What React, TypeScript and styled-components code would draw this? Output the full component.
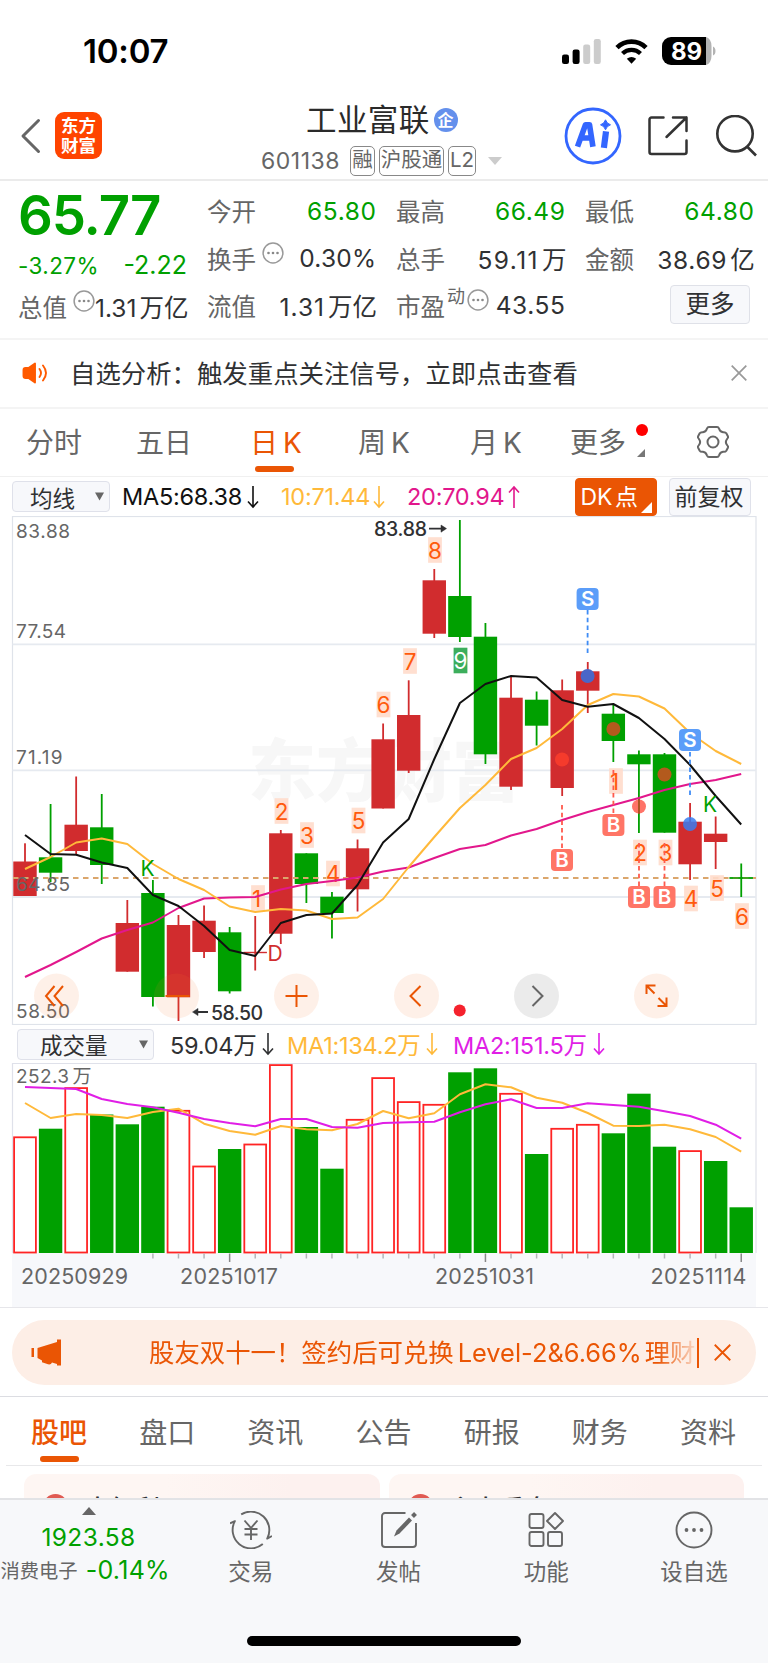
import React from "react";
import styled, { createGlobalStyle } from "styled-components";

const GREEN = "#00a000";
const RED = "#d12c2e";
const ORANGE = "#ea5504";
const GREY = "#666";
const INK = "#303133";
const FONT = `Inter, "Noto Sans CJK SC", sans-serif`;

const Global = createGlobalStyle`
  * { box-sizing: border-box; }
  body { margin: 0; background: #fff; font-family: ${FONT}; color: ${INK}; }
  svg { display: block; flex: none; }
  svg text { font-family: ${FONT}; }
`;

const Screen = styled.div`
  width: 768px;
  height: 1663px;
  overflow: hidden;
  display: flex;
  flex-direction: column;
  white-space: nowrap;
  > * { flex: none; }
`;

/* ---------- status bar ---------- */
const StatusBar = styled.div`
  height: 101px;
  display: flex;
  align-items: center;
  padding: 1px 52px 0 83px;
`;
const Clock = styled.div`
  flex: 1;
  font-size: 33px;
  font-weight: 600;
  letter-spacing: -0.2px;
  color: #000;
`;
const StatusIcons = styled.div`
  display: flex;
  align-items: center;
  gap: 14px;
`;

/* ---------- title bar ---------- */
const TitleBar = styled.div`
  height: 80px;
  display: flex;
  align-items: flex-start;
  border-bottom: 2px solid #ebebeb;
`;
const Back = styled.div`
  padding: 17px 0 0 20px;
`;
const Brand = styled.div`
  margin: 11px 0 0 14px;
  width: 47px;
  height: 47px;
  border-radius: 9px;
  background: #ff4400;
  color: #fff;
  font: 700 17.5px/20px "Noto Sans CJK SC", sans-serif;
  text-align: center;
  padding-top: 3px;
`;
const TitleBlock = styled.div`
  width: 244px;
  margin-left: 159px;
`;
const Name = styled.div`
  display: flex;
  align-items: center;
  height: 34px;
  padding-left: 45px;
  font-size: 30.5px;
  letter-spacing: 0.4px;
  color: #2a2a2a;
`;
const CorpBadge = styled.span`
  margin: 3px 0 0 4px;
  width: 24px;
  height: 24px;
  border-radius: 50%;
  background: #6490ec;
  color: #fff;
  font: 700 16px/23px "Noto Sans CJK SC", sans-serif;
  text-align: center;
  letter-spacing: 0;
`;
const Sub = styled.div`
  display: flex;
  align-items: center;
  height: 31px;
  margin-top: 10px;
  font-size: 23px;
  color: ${GREY};
`;
const Code = styled.span`
  width: 89px;
  letter-spacing: 0.5px;
`;
const Tag = styled.span<{ $w: number }>`
  width: ${(p) => p.$w}px;
  height: 30px;
  margin-right: 4px;
  border: 1.5px solid #888;
  border-radius: 5px;
  text-align: center;
  font-size: 20.5px;
  line-height: 26px;
`;
const Actions = styled.div`
  display: flex;
  align-items: center;
  height: 70px;
  margin-left: 59px;
`;

/* ---------- quote ---------- */
const Quote = styled.div`
  height: 159px;
  display: grid;
  grid-template-columns: 169px 169px 169px 169px;
  column-gap: 20px;
  padding: 0 14px 0 18px;
  border-bottom: 2px solid #f4f4f4;
`;
const QuoteCol = styled.div`
  display: flex;
  flex-direction: column;
  padding-top: 6px;
`;
const Cell = styled.div`
  position: relative;
  height: 47.4px;
  display: flex;
  justify-content: space-between;
  align-items: center;
  font-size: 24.5px;
`;
const Label = styled.span`
  display: flex;
  align-items: center;
  color: ${GREY};
  font-size: 24.5px;
`;
const Value = styled.span<{ $c?: string; $ls?: number }>`
  color: ${(p) => p.$c || INK};
  letter-spacing: ${(p) => p.$ls ?? 0.6}px;
  margin-right: ${(p) => -(p.$ls ?? 0.6)}px;
`;
const Unit = styled.span`
  margin-left: 3px;
  letter-spacing: 0;
`;
const Sup = styled.span`
  font-size: 18px;
  margin: -20px 2px 0 2px;
`;
const Dots = styled.span`
  display: flex;
  margin: -11px 0 0 6px;
`;
const Price = styled.div`
  height: 60px;
  line-height: 57px;
  font-size: 54.5px;
  font-weight: 600;
  letter-spacing: -1.1px;
  color: ${GREEN};
`;
const Change = styled.div`
  height: 36px;
  display: flex;
  justify-content: space-between;
  align-items: center;
  color: ${GREEN};
  font-size: 22.5px;
  letter-spacing: 0.4px;
  span + span { font-size: 25px; letter-spacing: 0; }
`;
const MoreButton = styled.div`
  margin: -2px 4px 0 auto;
  width: 80px;
  height: 39px;
  border: 1.5px solid #dfe1e8;
  border-radius: 4px;
  background: #f7f8fb;
  text-align: center;
  font-size: 24.5px;
  line-height: 36px;
`;

/* ---------- notice ---------- */
const Notice = styled.div`
  height: 69px;
  display: flex;
  align-items: center;
  padding: 0 21px 1px 22px;
  border-bottom: 2px solid #f4f4f4;
  font-size: 25.4px;
`;
const NoticeText = styled.div`
  flex: 1;
  margin: -2px 0 0 22px;
`;

/* ---------- period tabs ---------- */
const Periods = styled.div`
  height: 68px;
  display: flex;
  border-bottom: 1px solid #f0f0f0;
  position: relative;
`;
const Period = styled.div<{ $on?: boolean; $w: number; $ml?: number }>`
  position: relative;
  width: ${(p) => p.$w}px;
  margin-left: ${(p) => p.$ml || 0}px;
  padding-top: 14px;
  font-size: 28px;
  line-height: 40px;
  color: ${(p) => (p.$on ? ORANGE : GREY)};
  word-spacing: -3px;
`;
const Underline = styled.i<{ $x: number; $y: number }>`
  position: absolute;
  left: ${(p) => p.$x}px;
  top: ${(p) => p.$y}px;
  width: 39px;
  height: 6px;
  border-radius: 3px;
  background: ${ORANGE};
`;
const NewDot = styled.i`
  position: absolute;
  left: 66px;
  top: 15px;
  width: 12px;
  height: 12px;
  border-radius: 50%;
  background: #ff0000;
`;
const Corner = styled.i<{ $c: string; $s: number; $r: number; $b: number }>`
  position: absolute;
  right: ${(p) => p.$r}px;
  bottom: ${(p) => p.$b}px;
  border-style: solid;
  border-width: 0 0 ${(p) => p.$s}px ${(p) => p.$s}px;
  border-color: transparent transparent ${(p) => p.$c} transparent;
`;

/* ---------- indicator bars ---------- */
const Indicators = styled.div<{ $h: number; $pl: number }>`
  height: ${(p) => p.$h}px;
  display: flex;
  align-items: center;
  padding: 0 16px 0 ${(p) => p.$pl}px;
`;
const Select = styled.div<{ $w: number; $pl: number }>`
  width: ${(p) => p.$w}px;
  height: 31px;
  padding: 0 5px 0 ${(p) => p.$pl}px;
  border: 1.5px solid #dfe1ea;
  border-radius: 4px;
  background: #f7f8fb;
  display: flex;
  align-items: center;
  justify-content: space-between;
  font-size: 22.5px;
`;
const Metric = styled.div<{ $c: string; $ml: number; $w: number }>`
  display: flex;
  align-items: center;
  justify-content: space-between;
  width: ${(p) => p.$w}px;
  margin-left: ${(p) => p.$ml}px;
  color: ${(p) => p.$c};
  font-size: 23.5px;
  letter-spacing: -0.25px;
`;
const Toggle = styled.div<{ $on?: boolean; $w: number; $ml: number }>`
  position: relative;
  width: ${(p) => p.$w}px;
  height: 38px;
  margin-left: ${(p) => p.$ml}px;
  border-radius: 4px;
  border: 1.5px solid ${(p) => (p.$on ? ORANGE : "#dfe1ea")};
  background: ${(p) => (p.$on ? ORANGE : "#f7f8fb")};
  color: ${(p) => (p.$on ? "#fff" : INK)};
  font-size: 23px;
  line-height: 37px;
  padding-left: 4.5px;
  word-spacing: -4px;
`;

/* ---------- charts ---------- */
const Chart = styled.div`
  height: 509px;
`;
const VolumeChart = styled.div`
  height: 244px;
`;

/* ---------- promo ---------- */
const PromoWrap = styled.div`
  height: 90px;
  padding: 12px;
  border-top: 1px solid #e6e6ea;
  border-bottom: 1px solid #dcdde2;
`;
const Promo = styled.div`
  height: 65px;
  border-radius: 33px;
  background: #fdeee6;
  color: ${ORANGE};
  display: flex;
  align-items: center;
  padding: 0 23px 0 19px;
  font-size: 25.4px;
`;
const PromoText = styled.div`
  margin: -3px 0 0 86px;
  width: 547px;
  overflow: hidden;
  -webkit-mask-image: linear-gradient(90deg, #000 93%, transparent 101%);
  mask-image: linear-gradient(90deg, #000 93%, transparent 101%);
`;
const Latin = styled.span`
  margin: 0 3px 0 4px;
`;
const PromoRule = styled.i`
  width: 1.5px;
  height: 30px;
  margin: 0 15px 0 1px;
  background: ${ORANGE};
`;

/* ---------- content tabs ---------- */
const Tabs = styled.div`
  position: relative;
  height: 69px;
  margin: 0 6px;
  padding: 0 26px 0 25px;
  display: flex;
  justify-content: space-between;
  border-bottom: 1.5px solid #e8e8ea;
`;
const Tab = styled.div<{ $on?: boolean }>`
  font-size: 28px;
  line-height: 40px;
  padding-top: 16px;
  color: ${(p) => (p.$on ? ORANGE : GREY)};
  font-weight: ${(p) => (p.$on ? 500 : 400)};
`;
const Cards = styled.div`
  height: 33px;
  padding: 8px 24px 0;
  display: grid;
  grid-template-columns: 1fr 1fr;
  gap: 9px;
  overflow: hidden;
`;
const Card = styled.div`
  height: 80px;
  padding: 16px 19px 0;
  border-radius: 12px;
  background: linear-gradient(90deg, #fef6f3 40%, #fdf1ef 75%);
  display: flex;
  align-items: flex-start;
  gap: 17px;
  font-size: 25px;
  line-height: 38px;
  font-weight: 500;
`;
const CardDot = styled.i`
  width: 25px;
  height: 25px;
  margin-top: 4px;
  border-radius: 50%;
  background: #e05a52;
`;

/* ---------- bottom bar ---------- */
const BottomBar = styled.div`
  position: relative;
  height: 165px;
  margin-top: -1px;
  background: #f7f8fa;
  border-top: 2px solid #e2e3e6;
  display: flex;
`;
const IndexBox = styled.div`
  width: 177px;
  display: flex;
  flex-direction: column;
  align-items: center;
  padding-top: 7px;
  color: ${GREEN};
`;
const IndexValue = styled.div`
  height: 36px;
  line-height: 38px;
  font-size: 24.5px;
  letter-spacing: 0.4px;
  margin-top: 3px;
`;
const IndexRow = styled.div`
  display: flex;
  align-items: center;
  gap: 8px;
  width: 176px;
  font-size: 25px;
  letter-spacing: 0.3px;
  height: 32px;
  span:first-child { font-size: 19.3px; letter-spacing: 0; color: ${GREY}; }
`;
const Action = styled.div`
  width: 147.7px;
  display: flex;
  flex-direction: column;
  align-items: center;
  padding-top: 11px;
  color: ${GREY};
  font-size: 22.5px;
  span { line-height: 32px; margin-top: 7px; }
`;
const HomeIndicator = styled.i`
  position: absolute;
  left: 247px;
  bottom: 17px;
  width: 274px;
  height: 10px;
  border-radius: 5px;
  background: #000;
`;

/* ---------- data ---------- */
// [up?, high, low, body top, body bottom]
type Candle = [number, number, number, number, number];
const candles: Candle[] = [
  [1, 843.3, 896, 861.5, 896], [0, 804, 882, 857.3, 872.7], [1, 776.5, 854, 824.7, 851],
  [0, 794, 884, 827.3, 865], [1, 900, 971.7, 923, 971.7], [0, 880, 1006.5, 893, 997],
  [1, 915, 1021, 925, 997.3], [1, 905.5, 958, 920.7, 952], [0, 927, 993.5, 932.3, 991.3],
  [1, 916, 970.5, 951.8, 953.2], [1, 830, 944, 833.3, 933.7], [0, 853.3, 903, 853.3, 884],
  [0, 892, 938.5, 896.7, 913], [1, 839.5, 911.5, 848.3, 889.3], [1, 723.5, 808.5, 739.3, 808.5],
  [1, 680.3, 773, 715, 770.7], [1, 569, 638, 580.3, 633.7], [0, 520, 642, 596, 637],
  [0, 623, 764, 636.7, 754.3], [1, 676.5, 790, 697.7, 786.7], [0, 691.5, 745.5, 699.7, 725.7],
  [1, 679.5, 796, 690.3, 788], [1, 662, 713, 671.3, 690.7], [0, 704.5, 762, 713.7, 741],
  [0, 750.5, 833, 754.3, 764.3], [0, 753, 832.7, 754.3, 832.7], [1, 803, 880, 821.7, 864.3],
  [1, 816.5, 869, 833.7, 842], [0, 863.5, 897, 877.3, 878.7],
];
const ma5 = [835, 854, 854.7, 862.5, 868, 895, 906, 926, 950, 956, 923, 915, 913.5, 885, 842.5, 819, 759, 703, 684, 676, 677.5, 700, 706.7, 704, 718, 739, 765, 796, 824.5];
const ma10 = [869, 857, 842.5, 838.5, 844, 864, 879, 890, 906.5, 912, 909, 910.5, 919, 917.5, 899, 867, 837, 808, 785, 759, 748, 729, 705, 694, 696.5, 708.5, 733, 751, 764];
const ma20 = [977, 965, 952, 938.5, 930, 922.5, 908, 898.5, 897.5, 897, 889.5, 884, 881, 877.5, 871.5, 867.5, 858, 849, 845, 835.5, 829, 820, 812, 805, 798, 790, 784, 780, 774];
// [up?, bar top]
const volumes: [number, number][] = [
  [1, 1136.5], [0, 1128.7], [1, 1087.3], [0, 1114.5], [0, 1124.3], [0, 1106.7], [1, 1110], [1, 1165.7],
  [0, 1149], [1, 1143.7], [1, 1064.3], [0, 1127], [0, 1168.7], [1, 1119], [1, 1077.3], [1, 1101.3],
  [1, 1104], [0, 1072.3], [0, 1068.3], [1, 1093], [0, 1154], [1, 1128], [1, 1124], [0, 1133.3],
  [0, 1093.7], [0, 1146.7], [1, 1150.3], [0, 1161], [0, 1207.3],
];
const vma1 = [234, 279, 267, 270, 279, 261, 251, 296, 318, 329, 303, 313, 316, 297, 258, 280, 265, 208, 178, 187, 218, 233, 264, 302, 303, 299, 313, 336, 380].map((v) => 1025 + v / 3);
const vma2 = [186, 189, 192, 222, 237, 247, 263, 282, 294, 304, 282, 282, 306, 308, 294, 292, 290, 262, 238, 223, 249, 249, 235, 240, 245, 259, 273, 299, 341].map((v) => 1025 + v / 3);

const cx = (i: number) => 25 + 25.58 * i;
const pts = (a: number[]) => a.map((y, i) => `${cx(i).toFixed(1)},${y.toFixed(1)}`).join(" ");

// [text, centre x, centre y, filled?]
const counts: [string, number, number, number?][] = [
  ["8", 435, 550], ["7", 410, 661], ["9", 460.5, 660.5, 1], ["6", 383.5, 704.5], ["1", 616, 781],
  ["2", 281.5, 811], ["3", 307, 835], ["4", 333, 873.5], ["5", 358.5, 820.5], ["1", 258, 898],
  ["2", 640, 852.5], ["3", 665.5, 852.5], ["4", 691, 898.5], ["5", 717, 888], ["6", 742, 916],
];

const RoundKey = ({ x, grey, children }: { x: number; grey?: boolean; children?: React.ReactNode }) => (
  <g transform={`translate(${x} 996)`} fill="none" stroke={grey ? "#666" : ORANGE} strokeWidth="2">
    <circle r="22.5" fill={grey ? "#888" : "#f5732d"} fillOpacity={grey ? 0.17 : 0.11} stroke="none" />
    {children}
  </g>
);

const Signal = ({ x, y, kind }: { x: number; y: number; kind: "S" | "B" }) => (
  <g>
    <rect x={x - 11} y={y - 11} width="22" height="22" rx="4" fill={kind === "S" ? "#5b9df9" : "#ff7566"} />
    <text x={x} y={y + 7.3} fontSize="20.5" fontWeight="600" fill="#fff" textAnchor="middle">{kind}</text>
  </g>
);

const PriceChart = () => (
  <svg width="768" height="509" viewBox="0 516 768 509">
    <text x="248" y="796" fontSize="68" fontWeight="900" fill="#f7f7f7" textLength="272">东方财富</text>
    <g stroke="#dfe3ea" fill="none">
      <rect x="12.5" y="516.5" width="743.5" height="508" strokeWidth="1.2" />
      <path d="M12.5 644.4H756M12.5 770.3H756M12.5 897H756" strokeWidth="1.8" stroke="#e6eaf0" />
    </g>
    {candles.map(([up, h, l, t, b], i) => (
      <g key={i} fill={up ? RED : GREEN}>
        <rect x={cx(i) - 0.9} y={h} width="1.8" height={l - h} />
        <rect x={cx(i) - 11.7} y={t} width="23.4" height={b - t} />
      </g>
    ))}
    <path d="M13 878H756" stroke="#dba66c" strokeWidth="2" strokeDasharray="5.5 4.5" />
    <path d={`M${cx(28) - 11.7} 878h23.4`} stroke={GREEN} strokeWidth="1.4" />
    <g fontSize="19" fill={GREY}>
      <text x="16" y="538" textLength="54">83.88</text>
      <text x="16" y="637.5" textLength="50">77.54</text>
      <text x="16" y="764" textLength="46.5">71.19</text>
      <text x="16" y="891" textLength="54">64.85</text>
      <text x="16" y="1017.5" textLength="54">58.50</text>
    </g>
    {counts.map(([t, x, y, f], i) => (
      <g key={i}>
        <rect x={x - 6.9} y={y - 12.8} width="13.8" height="25.6" fill={f ? "#3cae5c" : "#ffdccb"} fillOpacity={f ? 1 : 0.9} />
        <text x={t === "1" ? x - 1.5 : x} y={y + 8.6} fontSize="22.5" fill={f ? "#fff" : "#ff5a0c"} textAnchor="middle">{t}</text>
      </g>
    ))}
    <g fill="none" strokeWidth="2" strokeLinejoin="round">
      <polyline points={pts(ma20)} stroke="#e2178c" />
      <polyline points={pts(ma10)} stroke="#ffb93a" />
      <polyline points={pts(ma5)} stroke="#111" />
    </g>
    <g fill="none" strokeWidth="1.8" strokeDasharray="4.5 3.2">
      <path d="M587.6 610V655M690 752V797" stroke="#3f8cf5" />
      <path d="M562 805V850M613.4 770V815M639 843V887M664.5 843V887" stroke="#ff5a4d" />
    </g>
    <g>
      <circle cx="587.6" cy="676" r="7" fill="#4a66c8" />
      <circle cx="690" cy="824" r="7" fill="#3a7cf0" fillOpacity="0.85" />
      <circle cx="562" cy="759.5" r="7" fill="#f53b2c" />
      <circle cx="613.4" cy="729" r="7" fill="#b35a1d" />
      <circle cx="664.5" cy="774.5" r="7" fill="#b35a1d" />
      <circle cx="639" cy="806.5" r="7" fill="#ff5a4d" fillOpacity="0.85" />
      <path d="M639 799v15" stroke="#a0521d" strokeWidth="1.6" />
    </g>
    <Signal x={587.6} y={599} kind="S" />
    <Signal x={690} y={740} kind="S" />
    <Signal x={562} y={860} kind="B" />
    <Signal x={613.4} y={825} kind="B" />
    <Signal x={639} y={897} kind="B" />
    <Signal x={664.5} y={897} kind="B" />
    <g fontSize="21" fill={GREEN}>
      <text x="140.5" y="875.5">K</text>
      <text x="703" y="811.5">K</text>
      <text x="267.5" y="961" fill={RED}>D</text>
    </g>
    <g fontSize="19.5" fontWeight="550" fill={INK}>
      <text x="374" y="536" textLength="53">83.88</text>
      <text x="211" y="1020" textLength="52">58.50</text>
    </g>
    <g stroke={INK} strokeWidth="1.8" fill={INK}>
      <path d="M429 528.6h16M208 1012h-14" />
      <path d="M441 525l5.5 3.6-5.5 3.6zM198 1008.4l-5.5 3.6 5.5 3.6z" strokeWidth="0.5" />
    </g>
    <RoundKey x={56.5}><path d="M-2-10l-8.500 10 8.500 10M6.500-10l-8.500 10 8.500 10" /></RoundKey>
    <RoundKey x={176.5}><path d="M-11 0h24" /></RoundKey>
    <RoundKey x={296.5}><path d="M-11 0h22M0-11v22" /></RoundKey>
    <RoundKey x={416.5}><path d="M4-10l-10 10 10 10" /></RoundKey>
    <RoundKey x={536.5} grey><path d="M-4-10l10 10-10 10" /></RoundKey>
    <RoundKey x={656.5}><path d="M-10-2v-8.500h9M-10-10.500l8 8M10 1.500v8.500h-9M10 10l-8-8" /></RoundKey>
    <circle cx="459.7" cy="1010.5" r="6" fill="#f5222d" />
  </svg>
);

const VolumePlot = () => (
  <svg width="768" height="244" viewBox="0 1063 768 244">
    <rect x="12" y="1253" width="744" height="55" fill="#f7f8fb" />
    <path d="M12.5 1253V1063.5H756V1253" fill="none" stroke="#dfe1ea" strokeWidth="1.2" />
    {volumes.map(([up, t], i) =>
      up ? (
        <rect key={i} x={cx(i) - 10.9} y={t + 0.8} width="21.8" height={1251.700 - t} fill="#fff" stroke="#ff2424" strokeWidth="1.8" />
      ) : (
        <rect key={i} x={cx(i) - 11.7} y={t} width="23.4" height={1253 - t} fill={GREEN} />
      )
    )}
    <g fontSize="19" fill={GREY}>
      <text x="16" y="1083" textLength="53">252.3</text>
      <text x="72.5" y="1083">万</text>
    </g>
    <g fill="none" strokeWidth="2" strokeLinejoin="round">
      <polyline points={pts(vma1)} stroke="#ffb93a" />
      <polyline points={pts(vma2)} stroke="#e01ee6" />
    </g>
    {volumes.map((_, i) =>
      i < 5 ? null : (
        <path key={i} d={`M${cx(i)} 1253.5v${i % 10 === 8 ? 8.5 : 5}`} stroke={i % 10 === 8 ? "#888" : "#b4b4b8"} strokeWidth="1.5" />
      )
    )}
    <g fontSize="21.5" fill={GREY}>
      <text x="21" y="1283.5" textLength="107">20250929</text>
      <text x="180" y="1283.5" textLength="98">20251017</text>
      <text x="435" y="1283.5" textLength="99">20251031</text>
      <text x="650.5" y="1283.5" textLength="96">20251114</text>
    </g>
  </svg>
);

const Arrow = ({ up }: { up?: boolean }) => (
  <svg width="12" height="24" viewBox="0 0 12 24" fill="none" stroke="currentColor" strokeWidth="1.6">
    <path d={up ? "M6 23V2M1 7.500L6 2l5 5.500" : "M6 1v21M1 16.500L6 22l5-5.500"} />
  </svg>
);
const Caret = () => (
  <svg width="9" height="9" viewBox="0 0 9 9"><path d="M0 0.500h9L4.500 8.500z" fill="#666" /></svg>
);
const DotsIcon = () => (
  <svg width="22" height="22" viewBox="0 0 22 22">
    <circle cx="11" cy="11" r="9.9" fill="none" stroke="#999" strokeWidth="1.5" />
    <g fill="#888"><circle cx="6.500" cy="11" r="1.3" /><circle cx="11" cy="11" r="1.3" /><circle cx="15.500" cy="11" r="1.3" /></g>
  </svg>
);
const Cross = ({ s, c }: { s: number; c: string }) => (
  <svg width={s} height={s} viewBox="0 0 16 16"><path d="M0.700 0.700l14.600 14.600M15.300 0.700L0.700 15.300" stroke={c} strokeWidth="1.7" /></svg>
);

export default function App() {
  return (
    <Screen>
      <Global />
      <StatusBar>
        <Clock>10:07</Clock>
        <StatusIcons>
          <svg width="39" height="25" viewBox="0 0 39 25">
            <rect x="0" y="15.5" width="7" height="9.5" rx="2.2" />
            <rect x="10.6" y="10.5" width="7" height="14.5" rx="2.2" />
            <rect x="21.2" y="5.5" width="7" height="19.5" rx="2.2" fill="#ccc" />
            <rect x="31.8" y="0" width="7" height="25" rx="2.2" fill="#ccc" />
          </svg>
          <svg width="33" height="25" viewBox="0 0 33 25">
            <path d="M2 8.600a20.500 20.500 0 0 1 29 0" fill="none" stroke="#000" strokeWidth="4.6" />
            <path d="M7.500 14.600a12.800 12.800 0 0 1 18 0" fill="none" stroke="#000" strokeWidth="4.2" />
            <path d="M11.800 19.800a7.500 7.500 0 0 1 9.400 0L16.500 24.700z" />
          </svg>
          <svg width="54" height="28" viewBox="0 0 54 28">
            <path d="M9 0H44v28H9a9 9 0 0 1-9-9V9a9 9 0 0 1 9-9z" />
            <path d="M44 0a6.500 9 0 0 1 5.500 9v10a6.500 9 0 0 1-5.500 9z" fill="#b3b3b3" />
            <path d="M51 9.500q2.500 1 2.500 4.500t-2.500 4.500z" fill="#b3b3b3" />
            <text x="24.5" y="22.5" fontSize="24" fontWeight="650" fill="#fff" textAnchor="middle">89</text>
          </svg>
        </StatusIcons>
      </StatusBar>

      <TitleBar>
        <Back>
          <svg width="21" height="36" viewBox="0 0 21 36"><path d="M18.500 2.500L3 18l15.500 15.500" fill="none" stroke="#666" strokeWidth="3" strokeLinecap="round" strokeLinejoin="round" /></svg>
        </Back>
        <Brand>东方<br />财富</Brand>
        <TitleBlock>
          <Name>工业富联<CorpBadge>企</CorpBadge></Name>
          <Sub>
            <Code>601138</Code>
            <Tag $w={25}>融</Tag>
            <Tag $w={65}>沪股通</Tag>
            <Tag $w={28}>L2</Tag>
            <svg width="14" height="8" viewBox="0 0 14 8" style={{ marginLeft: 8 }}><path d="M0 0h14L7 8z" fill="#ccc" /></svg>
          </Sub>
        </TitleBlock>
        <Actions>
          <svg width="58" height="58" viewBox="0 0 58 58">
            <circle cx="29" cy="29" r="27" fill="#fff" stroke="#3366ff" strokeWidth="2.8" />
            <path d="M14.500 37L21.500 17.800h4L28.500 37M19 31h8" fill="none" stroke="#3366ff" strokeWidth="5.6" strokeLinejoin="round" strokeLinecap="square" />
            <path d="M41.600 27.500l-1.300 10.300" stroke="#3366ff" strokeWidth="6.200" strokeLinecap="square" />
            <path d="M41.500 12.800q1.200 3.800 5 5-3.800 1.200-5 5-1.200-3.800-5-5 3.800-1.200 5-5z" fill="#3366ff" stroke="#3366ff" />
          </svg>
          <svg width="42" height="42" viewBox="0 0 42 42" style={{ marginLeft: 25 }} fill="none" stroke="#333" strokeWidth="2.5" strokeLinejoin="round" strokeLinecap="round">
            <path d="M16.500 2.500H4.500a2 2 0 0 0-2 2V37a2 2 0 0 0 2 2h33a2 2 0 0 0 2-2V25.500M26 2.500h13.500V16M39.500 2.500L19.500 22" />
          </svg>
          <svg width="42" height="42" viewBox="0 0 42 42" style={{ marginLeft: 26 }} fill="none" stroke="#333" strokeWidth="2.6">
            <circle cx="20" cy="18.700" r="17.7" /><path d="M32 31.500L41 40.500" />
          </svg>
        </Actions>
      </TitleBar>

      <Quote>
        <QuoteCol>
          <Price>65.77</Price>
          <Change><span>-3.27%</span><span>-2.22</span></Change>
          <Cell><Label>总值<Dots><DotsIcon /></Dots></Label><Value $ls={0}>1.31<Unit>万亿</Unit></Value></Cell>
        </QuoteCol>
        <QuoteCol>
          <Cell><Label>今开</Label><Value $c={GREEN}>65.80</Value></Cell>
          <Cell><Label>换手<Dots><DotsIcon /></Dots></Label><Value $ls={0.2}>0.30%</Value></Cell>
          <Cell><Label>流值</Label><Value $ls={1}>1.31<Unit>万亿</Unit></Value></Cell>
        </QuoteCol>
        <QuoteCol>
          <Cell><Label>最高</Label><Value $c={GREEN}>66.49</Value></Cell>
          <Cell><Label>总手</Label><Value $ls={1.4}>59.11<Unit>万</Unit></Value></Cell>
          <Cell><Label>市盈<Sup>动</Sup><Dots style={{ marginLeft: 0 }}><DotsIcon /></Dots></Label><Value>43.55</Value></Cell>
        </QuoteCol>
        <QuoteCol>
          <Cell><Label>最低</Label><Value $c={GREEN}>64.80</Value></Cell>
          <Cell><Label>金额</Label><Value $ls={0.7}>38.69<Unit>亿</Unit></Value></Cell>
          <Cell><MoreButton>更多</MoreButton></Cell>
        </QuoteCol>
      </Quote>

      <Notice>
        <svg width="26" height="22" viewBox="0 0 26 22" fill="none" stroke="#ff5a00" strokeWidth="1.9" strokeLinecap="round">
          <path d="M3.500 6h3L13 1.500v19L6.500 16h-3q-2 0-2-2V8q0-2 2-2z" fill="#ff5a00" strokeLinejoin="round" />
          <path d="M17.500 7q3 4 0 8M21 3.500q6 7.500 0 15" />
        </svg>
        <NoticeText>自选分析：触发重点关注信号，立即点击查看</NoticeText>
        <Cross s={16} c="#999" />
      </Notice>

      <Periods>
        <Period $w={110} $ml={26}>分时</Period>
        <Period $w={114}>五日</Period>
        <Period $w={108} $on>日 K<Underline $x={5} $y={57} /></Period>
        <Period $w={112}>周 K</Period>
        <Period $w={100}>月 K</Period>
        <Period $w={127}>更多<NewDot /><Corner $c="#777" $s={8} $r={52} $b={19} /></Period>
        <svg width="34" height="34" viewBox="0 0 34 34" style={{ marginTop: 16, marginLeft: -1 }} fill="none" stroke="#666" strokeWidth="2" strokeLinejoin="round">
          <path d="M13 2h8q1.500 0 2 1.500 1 3.500 4 3.800 2.500-0.300 3.300 1l1.700 3.200q0.500 1.200-0.800 2.300-2.700 3.200 0 6.400 1.300 1.100 0.800 2.300l-1.700 3.200q-0.800 1.300-3.300 1-3 0.300-4 3.800-0.500 1.500-2 1.500h-8q-1.500 0-2-1.500-1-3.500-4-3.800-2.500 0.300-3.300-1l-1.700-3.200q-0.500-1.200 0.800-2.300 2.700-3.200 0-6.400-1.300-1.100-0.800-2.300l1.700-3.200q0.800-1.300 3.300-1 3-0.300 4-3.800 0.500-1.500 2-1.500z" />
          <circle cx="17" cy="17" r="5.5" />
        </svg>
      </Periods>

      <Indicators $h={39} $pl={12}>
        <Select $w={98} $pl={17}>均线<Caret /></Select>
        <Metric $c="#111" $ml={12} $w={137}>MA5:68.38<Arrow /></Metric>
        <Metric $c="#ffb93a" $ml={22} $w={104}>10:71.44<Arrow /></Metric>
        <Metric $c="#e2178c" $ml={22} $w={113}>20:70.94<Arrow up /></Metric>
        <Toggle $on $w={82} $ml={55}>DK 点<Corner $c="#fff" $s={11} $r={4} $b={2} /></Toggle>
        <Toggle $w={82} $ml={12}>前复权</Toggle>
      </Indicators>

      <Chart><PriceChart /></Chart>

      <Indicators $h={38} $pl={17}>
        <Select $w={137} $pl={22}>成交量<Caret /></Select>
        <Metric $c={INK} $ml={16} $w={104}>59.04万<Arrow /></Metric>
        <Metric $c="#ffb93a" $ml={13} $w={151}>MA1:134.2万<Arrow /></Metric>
        <Metric $c="#e01ee6" $ml={15} $w={152}>MA2:151.5万<Arrow /></Metric>
      </Indicators>

      <VolumeChart><VolumePlot /></VolumeChart>

      <PromoWrap>
        <Promo>
          <svg width="32" height="27" viewBox="0 0 32 27" fill={ORANGE}>
            <rect x="0.5" y="9" width="2.5" height="9" /><path d="M6.500 9L26 3V0.500h4v26h-4V25l-5-1.500q-1 2.500-4 1.800l-6-2V21.500L6.500 19z" />
          </svg>
          <PromoText>股友双十一！签约后可兑换<Latin>Level-2&amp;6.66%</Latin>理财</PromoText>
          <PromoRule />
          <Cross s={17} c={ORANGE} />
        </Promo>
      </PromoWrap>

      <Tabs>
        <Tab $on>股吧</Tab><Tab>盘口</Tab><Tab>资讯</Tab><Tab>公告</Tab><Tab>研报</Tab><Tab>财务</Tab><Tab>资料</Tab>
        <Underline $x={34} $y={59} />
      </Tabs>
      <Cards>
        <Card><CardDot />大红利</Card>
        <Card><CardDot />主力看盘</Card>
      </Cards>

      <BottomBar>
        <IndexBox>
          <svg width="14" height="8" viewBox="0 0 14 8"><path d="M0 8h14L7 0z" fill="#666" /></svg>
          <IndexValue>1923.58</IndexValue>
          <IndexRow><span>消费电子</span><span>-0.14%</span></IndexRow>
        </IndexBox>
        <Action>
          <svg width="42" height="38" viewBox="0 0 42 38" fill="none" stroke="#666" strokeWidth="1.9" strokeLinejoin="round">
            <path d="M11.200 3.400A18.400 18.400 0 0 1 37.200 27.600L42 25M32.800 33.100A18.400 18.400 0 0 1 4.900 10.100L0 12.300" />
            <path d="M14.500 9.500L21 17l6.500-7.500M21 17v12M14.500 18h13M14.500 23.500h13" />
          </svg>
          <span>交易</span>
        </Action>
        <Action>
          <svg width="38" height="38" viewBox="0 0 38 38" fill="none" stroke="#666" strokeWidth="1.9">
            <path d="M25.500 2H5a3 3 0 0 0-3 3v28a3 3 0 0 0 3 3h28a3 3 0 0 0 3-3V12" />
            <path d="M14 25.500l2.500-6L29 6.500l3 3L19.500 22.500z" fill="#666" stroke="none" />
            <path d="M32.500 5.500l3-3" strokeWidth="4" />
          </svg>
          <span>发帖</span>
        </Action>
        <Action>
          <svg width="36" height="38" viewBox="0 0 36 38" fill="none" stroke="#666" strokeWidth="1.9">
            <rect x="1.500" y="3" width="14" height="14" rx="2" /><rect x="1.500" y="21" width="14" height="14" rx="2" />
            <rect x="20" y="21" width="14" height="14" rx="2" /><path d="M27 2l8 8-8 8-8-8z" strokeLinejoin="round" />
          </svg>
          <span>功能</span>
        </Action>
        <Action>
          <svg width="38" height="38" viewBox="0 0 38 38">
            <circle cx="19" cy="19" r="17.5" fill="none" stroke="#666" strokeWidth="1.9" />
            <g fill="#666"><circle cx="11.500" cy="19" r="1.9" /><circle cx="19" cy="19" r="1.9" /><circle cx="26.500" cy="19" r="1.9" /></g>
          </svg>
          <span>设自选</span>
        </Action>
        <HomeIndicator />
      </BottomBar>
    </Screen>
  );
}
